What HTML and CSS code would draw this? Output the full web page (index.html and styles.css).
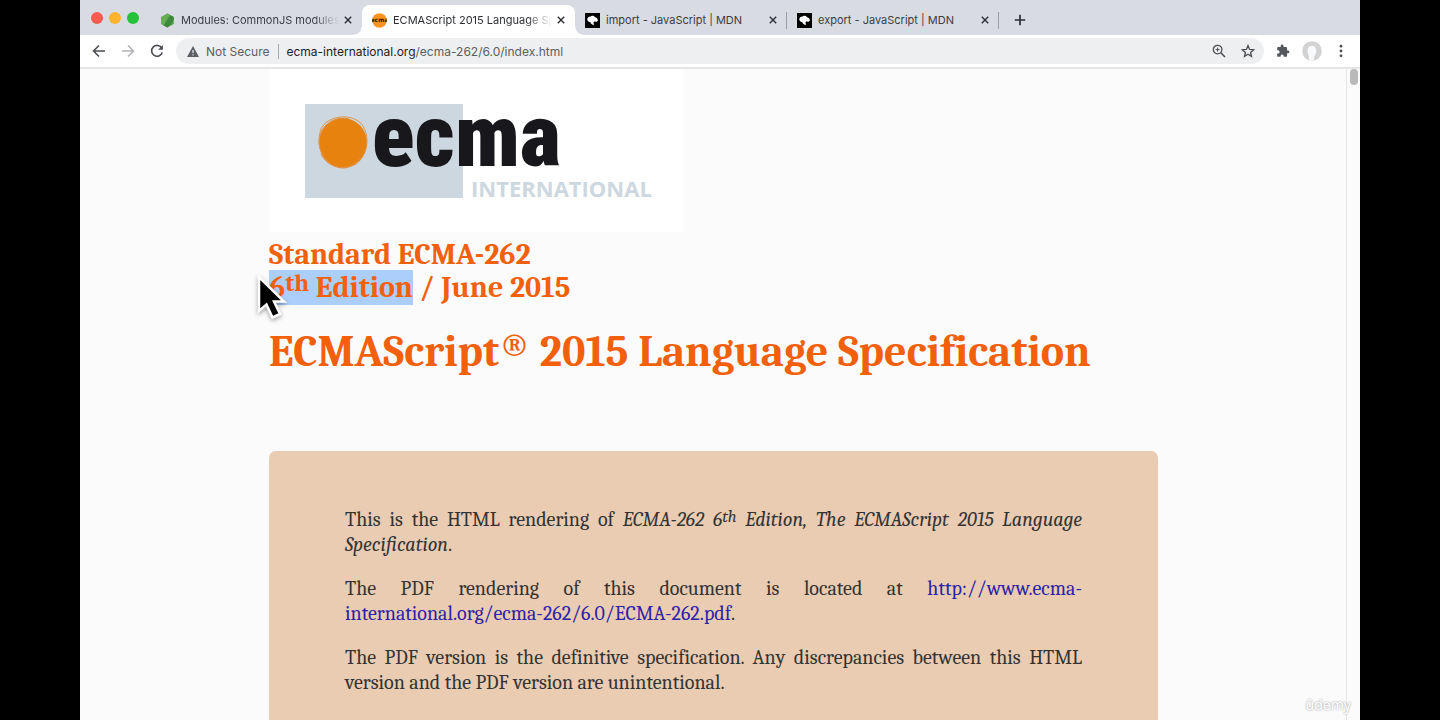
FILE: index.html
```html
<!DOCTYPE html>
<html lang="en">
<head>
<meta charset="utf-8">
<title>ECMAScript 2015 Language Specification</title>
<link rel="stylesheet" href="styles.css">
</head>
<body>
<div class="browser">
  <header class="tab-strip">
    <div class="lights">
      <button class="light light-close" aria-label="Close window"></button>
      <button class="light light-min" aria-label="Minimize window"></button>
      <button class="light light-max" aria-label="Zoom window"></button>
    </div>
    <div class="tab">
      <svg class="favicon" viewBox="0 0 15 15" aria-hidden="true"><path d="M7.5 0.5 13.7 4v7l-6.2 3.6L1.3 11V4z" fill="#4f9a45"/><path d="M7.5 .5 1.3 4v7l2.4 1.4L9.5 1.7z" fill="#68ad54"/><path d="M3.7 12.4 10.8 2.4 13.7 4v3L7.5 14.6z" fill="#3f873d"/></svg>
      <span class="tab-title fade">Modules: CommonJS modules</span>
      <button class="tab-close" aria-label="Close tab"><svg viewBox="0 0 8 8"><path d="M.8.8l6.4 6.4M7.2.8.8 7.2"/></svg></button>
    </div>
    <div class="tab active">
      <svg class="favicon" viewBox="0 0 15 15" aria-hidden="true"><circle cx="7.5" cy="7.5" r="7.3" fill="#f7931e"/><text class="favicon-text" x="7.5" y="9.2" text-anchor="middle">ecma</text></svg>
      <span class="tab-title fade">ECMAScript 2015 Language Specification</span>
      <button class="tab-close" aria-label="Close tab"><svg viewBox="0 0 8 8"><path d="M.8.8l6.4 6.4M7.2.8.8 7.2"/></svg></button>
    </div>
    <div class="tab divided">
      <svg class="favicon" viewBox="0 0 15 15" aria-hidden="true"><path d="M0 0h15v15H0z" fill="#000"/><path d="M2.300 6.500C2.300 4.500 3.600 3.500 5.400 3.500 6.600 2.400 9 2.800 9.700 3.900l2.300 1 1 2.700-1.300 1.200-2.600-.2c-.9.300-.7 1.800.2 3.200C7.200 11.900 5.600 10.700 5.300 8.900 3.900 9.200 2.500 8.300 2.300 6.500z" fill="#fff"/></svg>
      <span class="tab-title">import - JavaScript | MDN</span>
      <button class="tab-close" aria-label="Close tab"><svg viewBox="0 0 8 8"><path d="M.8.8l6.4 6.4M7.2.8.8 7.2"/></svg></button>
    </div>
    <div class="tab divided">
      <svg class="favicon" viewBox="0 0 15 15" aria-hidden="true"><path d="M0 0h15v15H0z" fill="#000"/><path d="M2.300 6.500C2.300 4.500 3.600 3.500 5.400 3.500 6.600 2.400 9 2.800 9.700 3.900l2.300 1 1 2.700-1.300 1.200-2.600-.2c-.9.300-.7 1.800.2 3.200C7.200 11.900 5.600 10.700 5.300 8.900 3.900 9.200 2.500 8.300 2.300 6.500z" fill="#fff"/></svg>
      <span class="tab-title">export - JavaScript | MDN</span>
      <button class="tab-close" aria-label="Close tab"><svg viewBox="0 0 8 8"><path d="M.8.8l6.4 6.4M7.2.8.8 7.2"/></svg></button>
    </div>
    <button class="new-tab" aria-label="New tab"><svg viewBox="0 0 12 12"><path d="M6 .8v10.400M.8 6h10.400"/></svg></button>
  </header>
  <nav class="toolbar" aria-label="Browser toolbar">
    <button class="tool" aria-label="Back"><svg viewBox="0 0 14 14"><path d="M13 7H2M7 1.500 1.500 7 7 12.500"/></svg></button>
    <button class="tool dim" aria-label="Forward"><svg viewBox="0 0 14 14"><path d="M1 7h11M7 1.500 12.500 7 7 12.500"/></svg></button>
    <button class="tool reload" aria-label="Reload"><svg viewBox="0 0 14 14"><path d="M11.800 4.300A5.400 5.400 0 1 0 12.200 8.400"/><path d="M12.900 1v4.800H8.100z" fill="#4a4d51" stroke="none"/></svg></button>
    <div class="omnibox">
      <svg class="warn" viewBox="0 0 12 11" aria-hidden="true"><path d="M6 0 12 11H0z" fill="#5b5e62"/><path d="M5.400 4h1.200v3H5.400zM5.400 8.200h1.200v1.200H5.400z" fill="#eeeff1"/></svg>
      <span class="secure">Not Secure</span>
      <span class="url"><span class="host">ecma-international.org</span>/ecma-262/6.0/index.html</span>
      <button class="tool" aria-label="Zoom"><svg viewBox="0 0 14 14"><circle cx="5.600" cy="5.600" r="4.300" stroke-width="1.300"/><path d="M8.800 8.800 13 13" stroke-width="1.600"/><path d="M5.600 3.600v4M3.600 5.600h4" stroke-width="1"/></svg></button>
      <button class="tool star" aria-label="Bookmark this page"><svg viewBox="0 0 14 14"><path d="M7 1.600 8.600 5.400l4.100.3-3.100 2.700.9 4L7 10.300l-3.500 2.100.9-4L1.300 5.700l4.100-.3z" stroke-width="1.300"/></svg></button>
    </div>
    <button class="tool ext" aria-label="Extensions"><svg viewBox="0 0 24 24"><path stroke="none" fill="#55585c" d="M20.500 11H19V7a2 2 0 0 0-2-2h-4V3.500a2.500 2.500 0 0 0-5 0V5H4a2 2 0 0 0-2 2v3.800h1.500a2.700 2.700 0 0 1 0 5.400H2V20a2 2 0 0 0 2 2h3.800v-1.500a2.700 2.700 0 0 1 5.400 0V22H17a2 2 0 0 0 2-2v-4h1.500a2.500 2.500 0 0 0 0-5z"/></svg></button>
    <button class="avatar" aria-label="Profile"><svg viewBox="0 0 20 20"><circle cx="10" cy="10" r="9.800" fill="#d2d2d2"/><path d="M5.600 9.500C5.600 6.600 7.500 4.700 10 4.700s4.200 2 4.200 4.900c0 2.300-.7 4.600-2 5.700v3.500c-1.500.6-3 .9-4.700.7-.6-1.200-1-2.300-.4-3.900C6 14.100 5.600 11.800 5.600 9.500z" fill="#f8f9fb"/></svg></button>
    <button class="tool menu" aria-label="Menu"><svg viewBox="0 0 14 14"><g fill="#4a4d51" stroke="none"><circle cx="7" cy="2.200" r="1.400"/><circle cx="7" cy="7" r="1.400"/><circle cx="7" cy="11.800" r="1.400"/></g></svg></button>
  </nav>
  <div class="viewport">
    <main class="page">
      <svg class="logo" viewBox="0 0 415 163" role="img" aria-label="Ecma International">
        <path d="M0 0h415v163H0z" fill="#fff"/>
        <path d="M36 35h158v94H36z" fill="#cdd7df"/>
        <ellipse cx="74" cy="74" rx="24" ry="25" fill="#e8820e"/>
        <g fill="none" stroke="#e0934a"><path d="M52 60C58 46 85 43 94 57c10 18 0 38-18 42-18 1-31-19-24-39z"/><path d="M50 76c-1-20 16-30 30-26M52 85c6 13 22 17 35 10"/></g>
        <text class="logo-name" x="103" y="97">ecma</text>
        <text class="logo-sub" x="202" y="128">INTERNATIONAL</text>
      </svg>
      <h2 class="edition">Standard ECMA-262<br><span class="selected">6<sup>th</sup> Edition</span> / June 2015</h2>
      <h1 class="spec-title">ECMAScript<sup>®</sup> 2015 Language Specification</h1>
      <section class="notice">
        <p>This is the HTML rendering of <i>ECMA-262 6<sup>th</sup> Edition, The ECMAScript 2015 Language Specification</i>.</p>
        <p>The PDF rendering of this document is located at <a href="http://www.ecma-international.org/ecma-262/6.0/ECMA-262.pdf">http://www.ecma-international.org/ecma-262/6.0/ECMA-262.pdf</a>.</p>
        <p>The PDF version is the definitive specification. Any discrepancies between this HTML version and the PDF version are unintentional.</p>
      </section>
    </main>
    <div class="scrollbar"><div class="thumb"></div></div>
  </div>
</div>
<svg class="pointer" viewBox="0 0 32 50" aria-hidden="true"><path d="M3 3v34l7.500-6.500 6 13 7.500-3.500-6-12.500H28z" fill="#000" stroke="#fff" stroke-width="2.500"/></svg>
<div class="watermark">ûdemy</div>
</body>
</html>
```

FILE: styles.css
```css
* { box-sizing: border-box; }
body {
  margin: 0;
  height: 100vh;
  overflow: hidden;
  background: #000;
  font-family: Inter, sans-serif;
}
button { padding: 0; border: 0; background: none; display: grid; place-items: center; }
svg { display: block; }
.browser {
  height: 100vh;
  margin: 0 80px;
  display: flex;
  flex-direction: column;
  background: #fbfbfb;
}
.tab-strip {
  display: flex;
  height: 35px;
  padding: 5px 12px 0 11px;
  background: #d8dbe2;
}
.lights { display: flex; gap: 6px; padding-top: 7px; margin-right: 11px; }
.light { width: 12px; height: 12px; border-radius: 50%; }
.light-close { background: #fb5a50; }
.light-min { background: #fbb42c; }
.light-max { background: #26c13b; }
.tab {
  position: relative;
  flex: 0 1 212px;
  min-width: 0;
  display: flex;
  align-items: center;
  padding: 0 10px;
  font-size: 11px;
  color: #3a3d42;
}
.tab.active { flex-basis: 213px; background: #fff; border-radius: 8px 8px 0 0; color: #2d2f33; }
.tab.active::before, .tab.active::after {
  content: "";
  position: absolute;
  bottom: 0;
  width: 8px;
  height: 8px;
}
.tab.active::before { right: 100%; background: radial-gradient(circle at 0 0, transparent 7px, #fff 8px); }
.tab.active::after { left: 100%; background: radial-gradient(circle at 100% 0, transparent 7px, #fff 8px); }
.tab.divided { background: linear-gradient(#9a9da3, #9a9da3) right 7px / 1px 17px no-repeat; }
.favicon { width: 15px; height: 15px; flex: none; margin-right: 6px; }
.favicon-text { font: 700 6px "DejaVu Sans", sans-serif; fill: #241503; }
.tab-title { flex: 1; min-width: 0; overflow: hidden; white-space: nowrap; }
.fade { -webkit-mask-image: linear-gradient(90deg, #000 84%, transparent); mask-image: linear-gradient(90deg, #000 84%, transparent); }
.tab-close { width: 8px; height: 8px; margin: 0 0 0 5px; flex: none; }
.tab-close svg { width: 8px; height: 8px; stroke: #2d2f33; stroke-width: 1.4; }
.new-tab { width: 12px; margin-left: 15px; }
.new-tab svg { width: 12px; height: 12px; stroke: #2d2f33; stroke-width: 1.7; }
.toolbar {
  display: flex;
  align-items: center;
  height: 34px;
  padding: 0 12px;
  background: #fff;
  border-bottom: 2px solid #e4e4e6;
}
.tool { width: 14px; height: 14px; margin-right: 15px; flex: none; }
.tool svg { width: 14px; height: 14px; fill: none; stroke: #4a4d51; stroke-width: 1.6; }
.tool.dim svg { stroke: #b0b2b5; }
.tool.reload { margin-right: 12px; }
.tool.star { margin-right: 9px; }
.omnibox {
  flex: 1;
  display: flex;
  align-items: center;
  height: 26px;
  padding: 0 0 0 11px;
  border-radius: 13px;
  background: #eeeff1;
  font-size: 12px;
  color: #5b5e62;
}
.warn { width: 12px; height: 11px; margin-right: 7px; }
.secure { padding-right: 8px; margin-right: 8px; border-right: 1px solid #a9abae; }
.url { flex: 1; }
.host { color: #1f2124; }
.tool.ext { margin: 0 12px; }
.avatar { width: 20px; height: 20px; margin-right: 12px; }
.avatar svg { width: 20px; height: 20px; }
.tool.menu { margin: 0; }
.viewport { flex: 1; min-height: 0; display: flex; overflow: hidden; }
.page {
  flex: 1;
  padding: 0 188px 0 189px;
  font-family: Cambria, Caladea, "Liberation Serif", serif;
  color: #333;
}
.scrollbar { width: 14px; padding: 0 3px; border-left: 1px solid #e6e6e6; }
.thumb { width: 8px; height: 16px; border-radius: 4px; background: #b9b9b9; }
.logo { width: 415px; height: 163px; }
.logo-name { font: 900 88px "Roboto Condensed", Roboto, sans-serif; fill: #18171b; }
.logo-sub { font: 700 22px "Open Sans", sans-serif; fill: #cdd7df; }
sup { font-size: 83%; line-height: 0; vertical-align: 0.24em; }
.edition, .spec-title { margin: 0; color: #f2600c; }
.edition { margin-top: 6px; font-size: 30px; line-height: 33px; }
.selected { background: #accefa; }
.spec-title { margin-top: 23px; font-size: 44px; line-height: 50px; }
.notice {
  margin-top: 74px;
  padding: 56px 76px 24px;
  min-height: 400px;
  border-radius: 7px;
  background: #e9ccb2;
  font-size: 20px;
  line-height: 25px;
  text-align: justify;
}
.notice p { margin: 0 0 19px; }
.notice a { color: #2e22a8; text-decoration: none; }
.pointer { position: absolute; left: 256px; top: 274px; width: 32px; height: 50px; filter: drop-shadow(0 2px 2px rgba(0, 0, 0, .35)); }
.watermark {
  position: absolute;
  right: 89px;
  bottom: 7px;
  font: 14px "Noto Sans", sans-serif;
  line-height: 16px;
  color: #fff;
  text-shadow: 0 0 2px #888;
}
```
